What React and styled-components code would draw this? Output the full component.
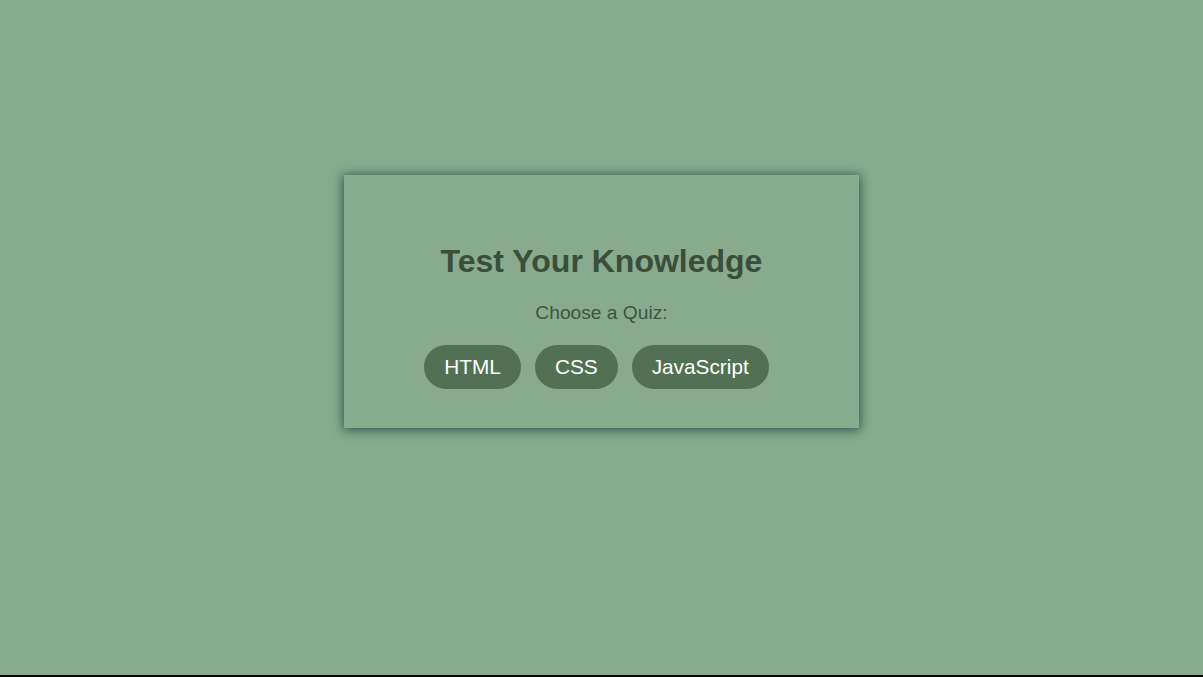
import React from "react";
import styled, { createGlobalStyle } from "styled-components";

const GlobalStyle = createGlobalStyle`
  html, body {
    margin: 0;
    padding: 0;
    background: #000;
  }
  body {
    font-family: "Liberation Sans", Arial, sans-serif;
  }
`;

const Page = styled.div`
  height: calc(100vh - 2px);
  background-color: #87ab8c;
  padding-top: 175px;
  box-sizing: border-box;
  display: flex;
  justify-content: center;
  align-items: flex-start;
`;

const Card = styled.div`
  width: 515px;
  box-sizing: border-box;
  padding: 68px 20px 39px;
  background-color: #87ab8c;
  box-shadow: 0 1px 10px 1px darkslategray;
  display: flex;
  flex-direction: column;
  align-items: center;
`;

const Title = styled.h1`
  margin: 0;
  font-size: 32px;
  font-weight: bold;
  color: #3a4e39;
`;

const Subtitle = styled.p`
  margin: 21px 0 0;
  font-size: 19.2px;
  line-height: 23px;
  color: #3d563e;
`;

const Choices = styled.div`
  margin-top: 21px;
  display: flex;
  gap: 4px;
`;

const QuizButton = styled.button`
  font-family: "Liberation Sans", Arial, sans-serif;
  font-size: 20.8px;
  line-height: 23px;
  color: #fff;
  background-color: #527154;
  border: none;
  border-radius: 22px;
  padding: 10px 20px 11px;
  margin-right: 10px;
  cursor: pointer;
`;

const quizzes = ["HTML", "CSS", "JavaScript"];

const App = () => {
  return (
    <>
      <GlobalStyle />
      <Page>
        <Card>
          <Title>Test Your Knowledge</Title>
          <Subtitle>Choose a Quiz:</Subtitle>
          <Choices>
            {quizzes.map((quiz) => (
              <QuizButton key={quiz}>{quiz}</QuizButton>
            ))}
          </Choices>
        </Card>
      </Page>
    </>
  );
};

export default App;
